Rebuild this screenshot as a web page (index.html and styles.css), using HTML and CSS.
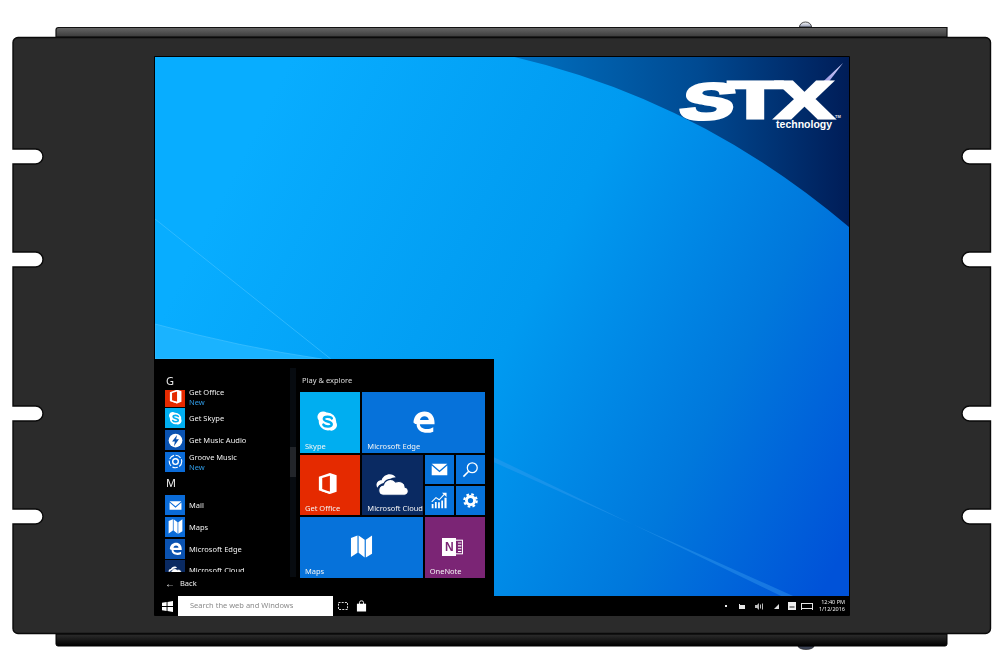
FILE: index.html
```html
<!DOCTYPE html>
<html lang="en">
<head>
<meta charset="utf-8">
<title>STX Technology panel display</title>
<link rel="stylesheet" href="styles.css">
</head>
<body>
<svg class="defs" width="0" height="0" aria-hidden="true">
  <symbol id="i-skype" viewBox="0 0 24 24">
    <path fill="#fff" d="M7.500 1.500a5.800 5.800 0 0 1 3.600 1.200 9.600 9.600 0 0 1 10 10.200 5.800 5.800 0 0 1-6.900 8.300A9.600 9.600 0 0 1 2.900 11 5.800 5.800 0 0 1 7.500 1.500z"/>
    <path fill="none" stroke="currentColor" stroke-width="2.600" stroke-linecap="round" d="M16.500 8.800C15.800 6.800 8.300 6 8.200 9.300c-.1 3.400 8.300 2 8.200 5.600-.1 3.300-7.500 2.800-8.700.4"/>
  </symbol>
  <symbol id="i-edge" viewBox="0 0 24 24">
    <path fill="#fff" d="M1.500 13C2 5.500 7 1.500 13 1.500c6.500 0 10.500 4.700 10.500 11.500v1.900H8.200c.4 5.500 8.700 6.400 14 3v4.700C15 25.500 4.500 23.500 4.800 14.500 3.500 15 2.500 14 1.500 13zM8.300 10.500h9.200C17.300 5.200 9 5 8.300 10.500z"/>
  </symbol>
  <symbol id="i-office" viewBox="0 0 24 24">
    <path fill="#fff" d="M14.500 1 21.500 3.500v17L14.500 23 3 19V5zM14.500 4 6.500 6.300v11.500l8 2.700z"/>
    <path fill="#fff" d="M3 19l11.500 1.500V23z"/>
  </symbol>
  <symbol id="i-cloud" viewBox="0 0 36 26">
    <path fill="#fff" d="M2.500 17.500C0 13.500 3 9 7 9.500 9 3 18 1 22 6.500c-5 0-7.500 3-8.500 5.500-5 .2-9 1.500-11 5.500z"/>
    <path fill="#fff" stroke="#0a2a62" stroke-width="1.200" d="M9 25.500c-6.500 0-7-10 0-11 1.500-6 9-8 13-3 5-2 10 1 10 5.500 5 1 4 8.500-1 8.500z"/>
  </symbol>
  <symbol id="i-mail" viewBox="0 0 24 24">
    <path fill="#fff" d="M1 4h22l-11 9.500z"/>
    <path fill="#fff" d="M1 6.500 12 16 23 6.500V20H1z"/>
  </symbol>
  <symbol id="i-search" viewBox="0 0 24 24">
    <circle cx="14.500" cy="9.500" r="7" fill="none" stroke="#fff" stroke-width="1.800"/>
    <path d="M9.500 14.500 2 22" stroke="#fff" stroke-width="2.200"/>
  </symbol>
  <symbol id="i-chart" viewBox="0 0 24 24">
    <path fill="#fff" d="M1 17h2.500v6H1zM5.500 14H8v9H5.500zM10 14.500h2.500V23H10zM14.500 12H17v11h-2.500zM19 8h3v15h-3z"/>
    <path fill="none" stroke="#fff" stroke-width="1.500" d="M1 14 7 8l4.500 3L19 3"/>
    <path fill="#fff" d="M15.500 1H22v6z"/>
  </symbol>
  <symbol id="i-gear" viewBox="0 0 24 24">
    <circle cx="12" cy="12" r="6.500" fill="none" stroke="#fff" stroke-width="4.600"/>
    <circle cx="12" cy="12" r="10" fill="none" stroke="#fff" stroke-width="3.400" stroke-dasharray="4.200 3.650"/>
  </symbol>
  <symbol id="i-maps" viewBox="0 0 24 24">
    <path fill="#fff" d="M1 3 7.800 .5V18.500L1 23zM9 .5l6.300 4.500V23.500L9 18.500zM16.500 5 23 .5v19L16.500 23.500z"/>
  </symbol>
  <symbol id="i-note" viewBox="0 0 30 26">
    <rect x="9" y="1" width="13" height="24" fill="none" stroke="#fff" stroke-width="1.800"/>
    <path stroke="#fff" stroke-width="2" d="M14 6h6M14 11h6M14 16h6M14 21h6"/>
  </symbol>
  <symbol id="i-bolt" viewBox="0 0 24 24">
    <circle cx="12" cy="12" r="11" fill="#fff"/>
    <path fill="#0a52b0" d="M14.500 3 6.500 13.500h4.500L9.500 21l8-11H13z"/>
  </symbol>
  <symbol id="i-groove" viewBox="0 0 24 24">
    <circle cx="12" cy="12" r="10" fill="none" stroke="#fff" stroke-width="1.800" stroke-dasharray="9 2.500"/>
    <circle cx="12" cy="12" r="4.500" fill="none" stroke="#fff" stroke-width="2.200"/>
  </symbol>
  <symbol id="i-win" viewBox="0 0 12 12">
    <path fill="#fff" d="M0 2 5 1.200v4.300H0zM6 1 12 0v5.500H6zM0 6.500h5v4.300L0 10zM6 6.500h6V12l-6-1z"/>
  </symbol>
</svg>

<main class="device">
  <svg class="chassis" width="1000" height="669" viewBox="0 0 1000 669" aria-hidden="true">
    <defs>
      <linearGradient id="bar-top" x1="0" y1="0" x2="0" y2="1">
        <stop offset="0" stop-color="#666"/>
        <stop offset="1" stop-color="#3a3a3a"/>
      </linearGradient>
      <linearGradient id="bar-bottom" x1="0" y1="0" x2="0" y2="1">
        <stop offset="0" stop-color="#2e2e2e"/>
        <stop offset="1" stop-color="#000"/>
      </linearGradient>
      <linearGradient id="knob-top" x1="0" y1="0" x2="0" y2="1">
        <stop offset="0" stop-color="#fff"/>
        <stop offset="1" stop-color="#8f97b0"/>
      </linearGradient>
    </defs>
    <path d="M799.500 27a6 5 0 0 1 12 0z" fill="url(#knob-top)" stroke="#222" stroke-width=".8"/>
    <path d="M798 646a8 3.500 0 0 0 16 0z" fill="#3c4356" stroke="#111" stroke-width=".6"/>
    <path d="M56 37V30q0-2.500 2.500-2.500H947V37z" fill="url(#bar-top)" stroke="#111" stroke-width="1.200"/>
    <path d="M56 634H947V644q0 2-2 2H58q-2 0-2-2z" fill="url(#bar-bottom)" stroke="#000" stroke-width="1"/>
    <path fill="#2b2b2b" stroke="#0a0a0a" stroke-width="1.400" d="M18 37.500H985.500a5 5 0 0 1 5 5V149H969.500a7.500 7.500 0 0 0 0 15H990.500V252H969.500a7.500 7.500 0 0 0 0 15H990.500V406H969.500a7.500 7.500 0 0 0 0 15H990.500V509H969.500a7.500 7.500 0 0 0 0 15H990.500V628.500a5 5 0 0 1-5 5H18a5 5 0 0 1-5-5V524H35.500a7.500 7.500 0 0 0 0-15H13V421H35.500a7.500 7.500 0 0 0 0-15H13V267H35.500a7.500 7.500 0 0 0 0-15H13V164H35.500a7.500 7.500 0 0 0 0-15H13V42.500a5 5 0 0 1 5-5z"/>
  </svg>

  <section class="screen">
    <div class="desktop">
      <svg class="wallpaper" viewBox="155 57 695 539" preserveAspectRatio="none" aria-label="STX technology wallpaper">
        <defs>
          <linearGradient id="wall" gradientUnits="userSpaceOnUse" x1="220" y1="200" x2="860" y2="520">
            <stop offset="0" stop-color="#08adff"/>
            <stop offset=".45" stop-color="#009af0"/>
            <stop offset=".75" stop-color="#0078dc"/>
            <stop offset="1" stop-color="#0052d8"/>
          </linearGradient>
          <linearGradient id="corner" gradientUnits="userSpaceOnUse" x1="515" y1="57" x2="849" y2="57">
            <stop offset="0" stop-color="#0070c0"/>
            <stop offset=".55" stop-color="#004a92"/>
            <stop offset="1" stop-color="#001d58"/>
          </linearGradient>
          <linearGradient id="spark" gradientUnits="userSpaceOnUse" x1="843" y1="63" x2="808" y2="98">
            <stop offset="0" stop-color="#d8d6ff"/>
            <stop offset=".55" stop-color="#9a97e0"/>
            <stop offset="1" stop-color="#34349a"/>
          </linearGradient>
        </defs>
        <rect x="155" y="57" width="695" height="539" fill="url(#wall)"/>
        <path d="M155 324Q240 347 322 359H155z" fill="#1ab3ff" stroke="#4cc4ff" stroke-width=".6"/>
        <path d="M155 219 331 359" stroke="#3fc0ff" stroke-opacity=".7" stroke-width="1"/>
        <path d="M494 457 782 596H794L494 462z" fill="#3aa0f0" fill-opacity=".4"/>
        <path d="M515 57H850V227Q700 100 515 57z" fill="url(#corner)"/>
        <path d="M844 63 822 92 806 102 816 89z" fill="url(#spark)"/>
        <text class="logo-word" x="0" y="0" textLength="54" lengthAdjust="spacingAndGlyphs" transform="translate(678 118.500) skewX(-14)">S</text>
        <text class="logo-word" x="729" y="118.500" textLength="54" lengthAdjust="spacingAndGlyphs">T</text>
        <text class="logo-word" x="777" y="118.500" textLength="57" lengthAdjust="spacingAndGlyphs">X</text>
        <text class="logo-sub" x="777" y="128.500" textLength="56" lengthAdjust="spacingAndGlyphs">technology</text>
        <text class="logo-tm" x="836" y="118">TM</text>
      </svg>

      <nav class="start">
        <div class="apps">
          <div class="app-list">
            <div class="letter">G</div>
            <div class="app clipped">
              <span class="app-icon red"><svg class="i16"><use href="#i-office"/></svg></span>
              <span class="app-name">Get Office<small>New</small></span>
            </div>
            <div class="app">
              <span class="app-icon cyan"><svg class="i16"><use href="#i-skype"/></svg></span>
              <span class="app-name">Get Skype</span>
            </div>
            <div class="app">
              <span class="app-icon deep"><svg class="i16"><use href="#i-bolt"/></svg></span>
              <span class="app-name">Get Music Audio</span>
            </div>
            <div class="app">
              <span class="app-icon blue"><svg class="i16"><use href="#i-groove"/></svg></span>
              <span class="app-name">Groove Music<small>New</small></span>
            </div>
            <div class="letter letter-m">M</div>
            <div class="app">
              <span class="app-icon blue"><svg class="i12"><use href="#i-mail"/></svg></span>
              <span class="app-name">Mail</span>
            </div>
            <div class="app">
              <span class="app-icon blue"><svg class="i16"><use href="#i-maps"/></svg></span>
              <span class="app-name">Maps</span>
            </div>
            <div class="app">
              <span class="app-icon deep"><svg class="i12"><use href="#i-edge"/></svg></span>
              <span class="app-name">Microsoft Edge</span>
            </div>
            <div class="app">
              <span class="app-icon navy"><svg class="i16"><use href="#i-cloud"/></svg></span>
              <span class="app-name">Microsoft Cloud</span>
            </div>
          </div>
          <div class="back"><span class="back-arrow">←</span><span>Back</span></div>
        </div>

        <div class="scrollbar"><span class="scroll-thumb"></span></div>

        <div class="tiles-panel">
          <div class="tiles-title">Play &amp; explore</div>
          <div class="tiles">
            <div class="tile wide-2 tall-2 sky">
              <span class="tile-art"><svg class="i26"><use href="#i-skype"/></svg></span>
              <span class="tile-label">Skype</span>
            </div>
            <div class="tile wide-4 tall-2 azure">
              <span class="tile-art"><svg class="i24"><use href="#i-edge"/></svg></span>
              <span class="tile-label">Microsoft Edge</span>
            </div>
            <div class="tile wide-2 tall-2 red">
              <span class="tile-art"><svg class="i24"><use href="#i-office"/></svg></span>
              <span class="tile-label">Get Office</span>
            </div>
            <div class="tile wide-2 tall-2 navy">
              <span class="tile-art"><svg class="cloud"><use href="#i-cloud"/></svg></span>
              <span class="tile-label">Microsoft Cloud</span>
            </div>
            <div class="tile azure"><span class="tile-art"><svg class="i18"><use href="#i-mail"/></svg></span></div>
            <div class="tile azure"><span class="tile-art"><svg class="i18"><use href="#i-search"/></svg></span></div>
            <div class="tile azure"><span class="tile-art"><svg class="i18"><use href="#i-chart"/></svg></span></div>
            <div class="tile azure"><span class="tile-art"><svg class="i14"><use href="#i-gear"/></svg></span></div>
            <div class="tile wide-4 tall-2 azure">
              <span class="tile-art"><svg class="i24"><use href="#i-maps"/></svg></span>
              <span class="tile-label">Maps</span>
            </div>
            <div class="tile wide-2 tall-2 plum">
              <span class="tile-art onenote"><span class="on-n">N</span><svg class="on-tabs"><use href="#i-note"/></svg></span>
              <span class="tile-label">OneNote</span>
            </div>
          </div>
        </div>
      </nav>
    </div>

    <footer class="taskbar">
      <svg class="win"><use href="#i-win"/></svg>
      <div class="search"><span class="search-text">Search the web and Windows</span></div>
      <svg class="taskview" viewBox="0 0 10 8"><path fill="none" stroke="#ddd" stroke-width="1" stroke-dasharray="2 1.200" d="M.5.500h9v7h-9z"/></svg>
      <svg class="store" viewBox="0 0 12 12"><path fill="#fff" d="M1 3.500h10V12H1z"/><path fill="none" stroke="#fff" d="M3.800 4V2a2 1.500 0 0 1 4.400 0v2"/></svg>
      <div class="tray">
        <span class="tray-dot"></span>
        <svg class="tray-batt" viewBox="0 0 7 5"><path fill="#e6e6e6" d="M0 0h1v1h5v4H0z"/></svg>
        <svg class="tray-speaker" viewBox="0 0 9 7"><path fill="#bbb" d="M0 2h2l2-2v7L2 5H0z"/><path fill="none" stroke="#bbb" d="M5.500 1.500v4M7.500.500v6"/></svg>
        <svg class="tray-signal" viewBox="0 0 5 5"><path fill="#ddd" d="M5 0v5H0z"/></svg>
        <svg class="tray-action" viewBox="0 0 8 8"><path fill="#eee" d="M0 0h8v8H0z"/><path fill="#222" d="M1.500 4.500h5v1h-5z"/></svg>
        <svg class="tray-keys" viewBox="0 0 12 7"><path fill="none" stroke="#e6e6e6" d="M.5 0v7M11.500 0v7M.5 5.500h11M.5.500h11"/></svg>
        <div class="clock"><span>12:40 PM</span><span>1/12/2016</span></div>
      </div>
    </footer>
  </section>
</main>
</body>
</html>
```

FILE: styles.css
```css
* {
  box-sizing: border-box;
}

html,
body {
  margin: 0;
  background: #fff;
}

body {
  width: 1000px;
  height: 669px;
  overflow: hidden;
  font-family: "Noto Sans", "Open Sans", sans-serif;
}

.defs {
  position: absolute;
}

.device {
  position: relative;
  width: 1000px;
  height: 669px;
}

.chassis {
  position: absolute;
  left: 0;
  top: 0;
  display: block;
}

.screen {
  position: absolute;
  left: 154px;
  top: 56px;
  width: 696px;
  height: 560px;
  padding: 1px 1px 0;
  background: #000;
  border-radius: 1px;
  display: flex;
  flex-direction: column;
}

.desktop {
  position: relative;
  height: 539px;
  flex: none;
}

.wallpaper {
  display: block;
  width: 100%;
  height: 100%;
}

.logo-word {
  font-family: "Liberation Sans", sans-serif;
  font-weight: 700;
  font-size: 51px;
  fill: #fff;
  stroke: #fff;
  stroke-width: 3;
}

.logo-sub {
  font-family: "Liberation Sans", sans-serif;
  font-weight: 700;
  font-size: 10.500px;
  fill: #fff;
}

.logo-tm {
  font-family: "Liberation Sans", sans-serif;
  font-weight: 700;
  font-size: 4px;
  fill: #e6e6e6;
}

/* start menu */

.start {
  position: absolute;
  left: 0;
  bottom: 0;
  width: 339px;
  height: 237px;
  background: #000;
  display: flex;
  color: #f0f0f0;
  font-size: 8px;
  line-height: 9px;
}

.apps {
  width: 135px;
  flex: none;
  padding: 15px 0 0 10px;
  display: flex;
  flex-direction: column;
}

.app-list {
  height: 198px;
  overflow: hidden;
  display: flex;
  flex-direction: column;
  gap: 1.700px;
  filter: blur(.3px);
}

.letter {
  height: 14px;
  font-size: 11px;
  line-height: 14px;
  color: #eee;
  margin-left: 1px;
  flex: none;
}

.letter-m {
  height: 20px;
  line-height: 20px;
}

.app {
  display: flex;
  align-items: center;
  gap: 4px;
  height: 20px;
  flex: none;
}

.app.clipped {
  height: 17px;
  overflow: hidden;
  align-items: flex-end;
}

.app-icon {
  width: 20px;
  height: 20px;
  flex: none;
  display: flex;
  align-items: center;
  justify-content: center;
}

.app-icon.cyan {
  color: #00aef0;
}

.app-name {
  display: block;
  white-space: nowrap;
  font-size: 7.500px;
  line-height: 10px;
}

.app-name small {
  display: block;
  font-size: 7.500px;
  line-height: 10px;
  color: #2f9be6;
}

.back {
  display: flex;
  align-items: center;
  gap: 5px;
  margin-top: 5px;
  font-size: 7.500px;
  height: 12px;
  filter: blur(.3px);
}

.back-arrow {
  width: 10px;
  font-size: 10px;
  line-height: 12px;
}

.scrollbar {
  width: 6px;
  flex: none;
  margin-top: 9px;
  height: 209px;
  background: #070b10;
  display: flex;
  flex-direction: column;
  padding-top: 79px;
}

.scroll-thumb {
  display: block;
  height: 30px;
  background: #22252a;
}

.tiles-panel {
  margin-left: 4px;
  padding-top: 15px;
  width: 185px;
  flex: none;
}

.tiles-title {
  height: 12px;
  margin: 0 0 6px 2px;
  font-size: 7.500px;
  line-height: 12px;
  color: #ddd;
  filter: blur(.3px);
}

.tiles {
  width: 185px;
  height: 186px;
  display: grid;
  grid-template-columns: repeat(6, 1fr);
  grid-template-rows: repeat(6, 1fr);
  gap: 2px;
}

.tile {
  display: flex;
  flex-direction: column;
  min-width: 0;
  min-height: 0;
  overflow: hidden;
}

.wide-2 {
  grid-column: span 2;
}

.wide-4 {
  grid-column: span 4;
}

.tall-2 {
  grid-row: span 2;
}

.tile-art {
  flex: 1;
  min-height: 0;
  display: flex;
  align-items: center;
  justify-content: center;
  filter: blur(.3px);
}

.tall-2 .tile-art {
  padding-top: 10px;
}

.sky .tile-art,
.red .tile-art {
  padding-right: 5px;
}

.tile-label {
  flex: none;
  height: 12px;
  padding-left: 5px;
  font-size: 7.500px;
  line-height: 10px;
  white-space: nowrap;
  color: #f4f4f4;
  filter: blur(.3px);
}

.sky {
  background: #00aef0;
  color: #00aef0;
}

.azure {
  background: #0672da;
  color: #0672da;
}

.red {
  background: #e52a00;
}

.navy {
  background: #0a2a62;
}

.plum {
  background: #7b2575;
}

.deep {
  background: #0a52b0;
}

.blue {
  background: #0a6bd8;
}

.cyan {
  background: #00aef0;
}

.i12 {
  width: 13px;
  height: 13px;
}

.i14 {
  width: 15px;
  height: 15px;
}

.i16 {
  width: 15px;
  height: 15px;
}

.i18 {
  width: 17px;
  height: 17px;
}

.i24 {
  width: 23px;
  height: 23px;
}

.i26 {
  width: 23px;
  height: 23px;
}

.cloud {
  width: 34px;
  height: 25px;
}

.onenote {
  gap: 0;
}

.on-n {
  width: 14px;
  height: 18px;
  background: #fff;
  color: #7b2575;
  font-family: "Liberation Sans", sans-serif;
  font-weight: 700;
  font-size: 12px;
  line-height: 18px;
  text-align: center;
}

.on-tabs {
  width: 17px;
  height: 20px;
  margin-left: -6px;
}

/* taskbar */

.taskbar {
  flex: 1;
  display: flex;
  align-items: center;
  min-height: 0;
}

.win {
  width: 11px;
  height: 11px;
  margin-left: 7px;
  flex: none;
}

.search {
  width: 155px;
  height: 20px;
  margin-left: 5px;
  background: #fff;
  color: #8a8a8a;
  font-size: 7.500px;
  line-height: 18px;
  padding-left: 12px;
  white-space: nowrap;
  flex: none;
}

.search-text {
  display: block;
  filter: blur(.3px);
}

.taskview {
  width: 10px;
  height: 8px;
  margin-left: 5px;
  flex: none;
}

.store {
  width: 11px;
  height: 12px;
  margin-left: 8px;
  flex: none;
}

.tray {
  margin-left: auto;
  padding-right: 4px;
  display: flex;
  align-items: center;
  color: #eee;
}

.tray-dot {
  width: 2px;
  height: 2px;
  background: #eee;
}

.tray-batt {
  width: 7px;
  height: 5px;
  margin-left: 12px;
}

.tray-speaker {
  width: 9px;
  height: 7px;
  margin-left: 9px;
}

.tray-signal {
  width: 5px;
  height: 5px;
  margin-left: 10px;
}

.tray-action {
  width: 8px;
  height: 8px;
  margin-left: 9px;
}

.tray-keys {
  width: 12px;
  height: 7px;
  margin-left: 5px;
}

.clock {
  width: 26px;
  margin-left: 6px;
  display: flex;
  flex-direction: column;
  align-items: flex-end;
  font-size: 5.500px;
  line-height: 7px;
  white-space: nowrap;
  filter: blur(.3px);
}
```
